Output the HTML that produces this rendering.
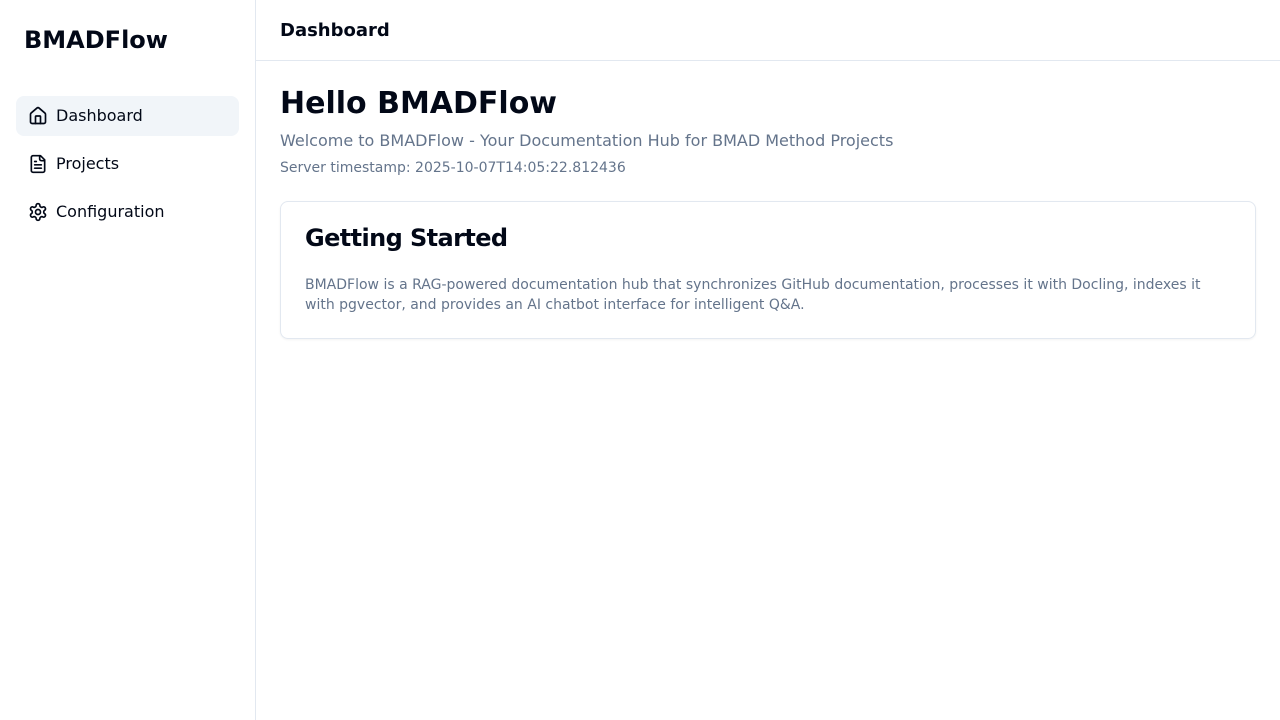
<!DOCTYPE html>
<html><head><meta charset="utf-8"><style>
*{box-sizing:border-box;margin:0;padding:0}
body{width:1280px;height:720px;font-family:"DejaVu Sans","Liberation Sans",sans-serif;background:#fff;color:#020817;position:relative;overflow:hidden}
.side{position:absolute;left:0;top:0;width:256px;height:720px;border-right:1px solid #e2e8f0}
.logo{position:absolute;left:24px;top:24px;font-size:24px;font-weight:bold;line-height:32px}
.nav{position:absolute;left:16px;width:223px;height:40px;border-radius:8px;display:flex;align-items:center;padding-left:12px;font-size:16px}
.nav span{position:relative;top:-1px}
.nav svg{width:20px;height:20px;margin-right:8px}
.act{background:#f1f5f9}
.top{position:absolute;left:256px;top:0;right:0;height:61px;border-bottom:1px solid #e2e8f0}
.top div{position:absolute;left:24px;top:20px;font-size:18px;font-weight:bold}
h1{position:absolute;left:280px;top:85px;font-size:30px;line-height:38px;font-weight:bold}
.sub{position:absolute;left:280px;top:130px;font-size:16px;color:#64748b;line-height:22px}
.ts{position:absolute;left:280px;top:159px;font-size:14px;color:#64748b;line-height:18px}
.card{position:absolute;left:280px;top:201px;width:976px;height:138px;border:1px solid #e2e8f0;border-radius:8px;box-shadow:0 1px 2px rgba(0,0,0,.05)}
.card h2{position:absolute;left:24px;top:20px;font-size:24px;line-height:32px;font-weight:bold;letter-spacing:-0.025em}
.card p{position:absolute;left:24px;top:73px;width:920px;font-size:14px;line-height:20px;color:#64748b}
</style></head><body>
<div class="side">
<div class="logo">BMADFlow</div>
<div class="nav act" style="top:96px"><svg viewBox="0 0 24 24" fill="none" stroke="#020817" stroke-width="2" stroke-linecap="round" stroke-linejoin="round"><path d="M15 21v-8a1 1 0 0 0-1-1h-4a1 1 0 0 0-1 1v8"/><path d="M3 10a2 2 0 0 1 .709-1.528l7-5.999a2 2 0 0 1 2.582 0l7 5.999A2 2 0 0 1 21 10v9a2 2 0 0 1-2 2H5a2 2 0 0 1-2-2z"/></svg><span>Dashboard</span></div>
<div class="nav" style="top:144px"><svg viewBox="0 0 24 24" fill="none" stroke="#020817" stroke-width="2" stroke-linecap="round" stroke-linejoin="round"><path d="M15 2H6a2 2 0 0 0-2 2v16a2 2 0 0 0 2 2h12a2 2 0 0 0 2-2V7Z"/><path d="M14 2v4a2 2 0 0 0 2 2h4"/><path d="M10 9H8"/><path d="M16 13H8"/><path d="M16 17H8"/></svg><span>Projects</span></div>
<div class="nav" style="top:192px"><svg viewBox="0 0 24 24" fill="none" stroke="#020817" stroke-width="2" stroke-linecap="round" stroke-linejoin="round"><path d="M12.22 2h-.44a2 2 0 0 0-2 2v.18a2 2 0 0 1-1 1.73l-.43.25a2 2 0 0 1-2 0l-.15-.08a2 2 0 0 0-2.730.73l-.22.38a2 2 0 0 0 .73 2.73l.15.1a2 2 0 0 1 1 1.72v.51a2 2 0 0 1-1 1.74l-.15.09a2 2 0 0 0-.73 2.73l.22.38a2 2 0 0 0 2.73.73l.15-.08a2 2 0 0 1 2 0l.43.25a2 2 0 0 1 1 1.73V20a2 2 0 0 0 2 2h.44a2 2 0 0 0 2-2v-.18a2 2 0 0 1 1-1.73l.43-.25a2 2 0 0 1 2 0l.15.08a2 2 0 0 0 2.73-.73l.22-.39a2 2 0 0 0-.73-2.730l-.15-.08a2 2 0 0 1-1-1.74v-.5a2 2 0 0 1 1-1.74l.15-.09a2 2 0 0 0 .73-2.73l-.22-.38a2 2 0 0 0-2.73-.73l-.15.08a2 2 0 0 1-2 0l-.43-.25a2 2 0 0 1-1-1.73V4a2 2 0 0 0-2-2z"/><circle cx="12" cy="12" r="3"/></svg><span>Configuration</span></div>
</div>
<div class="top"><div>Dashboard</div></div>
<h1>Hello BMADFlow</h1>
<div class="sub">Welcome to BMADFlow - Your Documentation Hub for BMAD Method Projects</div>
<div class="ts">Server timestamp: 2025-10-07T14:05:22.812436</div>
<div class="card"><h2>Getting Started</h2><p>BMADFlow is a RAG-powered documentation hub that synchronizes GitHub documentation, processes it with Docling, indexes it with pgvector, and provides an AI chatbot interface for intelligent Q&amp;A.</p></div>
</body></html>
